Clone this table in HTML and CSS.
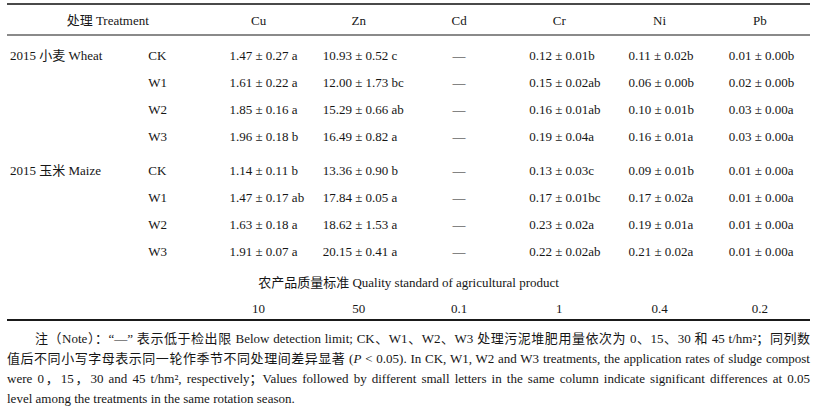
FILE: index.html
```html
<!DOCTYPE html>
<html lang="zh">
<head>
<meta charset="utf-8">
<title>Table</title>
<link rel="stylesheet" href="styles.css">
</head>
<body>
<div class="page">
  <table class="data">
    <colgroup>
      <col class="c-grp"><col class="c-trt">
      <col class="c-v"><col class="c-v"><col class="c-v"><col class="c-v"><col class="c-v"><col class="c-v">
    </colgroup>
    <thead>
      <tr class="head">
        <th colspan="2">处理 Treatment</th>
        <th>Cu</th><th>Zn</th><th>Cd</th><th>Cr</th><th>Ni</th><th>Pb</th>
      </tr>
    </thead>
    <tbody>
      <tr class="gap1"><td colspan="8"></td></tr>
      <tr class="row">
        <td class="grp">2015 小麦 Wheat</td><td class="trt">CK</td>
        <td class="cu">1.47 ± 0.27 a</td><td class="zn">10.93 ± 0.52 c</td><td class="cd">—</td>
        <td class="cr">0.12 ± 0.01b</td><td class="ni">0.11 ± 0.02b</td><td class="pb">0.01 ± 0.00b</td>
      </tr>
      <tr class="row">
        <td class="grp"></td><td class="trt">W1</td>
        <td class="cu">1.61 ± 0.22 a</td><td class="zn">12.00 ± 1.73 bc</td><td class="cd">—</td>
        <td class="cr">0.15 ± 0.02ab</td><td class="ni">0.06 ± 0.00b</td><td class="pb">0.02 ± 0.00b</td>
      </tr>
      <tr class="row">
        <td class="grp"></td><td class="trt">W2</td>
        <td class="cu">1.85 ± 0.16 a</td><td class="zn">15.29 ± 0.66 ab</td><td class="cd">—</td>
        <td class="cr">0.16 ± 0.01ab</td><td class="ni">0.10 ± 0.01b</td><td class="pb">0.03 ± 0.00a</td>
      </tr>
      <tr class="row">
        <td class="grp"></td><td class="trt">W3</td>
        <td class="cu">1.96 ± 0.18 b</td><td class="zn">16.49 ± 0.82 a</td><td class="cd">—</td>
        <td class="cr">0.19 ± 0.04a</td><td class="ni">0.16 ± 0.01a</td><td class="pb">0.03 ± 0.00a</td>
      </tr>
      <tr class="gap2"><td colspan="8"></td></tr>
      <tr class="row">
        <td class="grp">2015 玉米 Maize</td><td class="trt">CK</td>
        <td class="cu">1.14 ± 0.11 b</td><td class="zn">13.36 ± 0.90 b</td><td class="cd">—</td>
        <td class="cr">0.13 ± 0.03c</td><td class="ni">0.09 ± 0.01b</td><td class="pb">0.01 ± 0.00a</td>
      </tr>
      <tr class="row">
        <td class="grp"></td><td class="trt">W1</td>
        <td class="cu">1.47 ± 0.17 ab</td><td class="zn">17.84 ± 0.05 a</td><td class="cd">—</td>
        <td class="cr">0.17 ± 0.01bc</td><td class="ni">0.17 ± 0.02a</td><td class="pb">0.01 ± 0.00a</td>
      </tr>
      <tr class="row">
        <td class="grp"></td><td class="trt">W2</td>
        <td class="cu">1.63 ± 0.18 a</td><td class="zn">18.62 ± 1.53 a</td><td class="cd">—</td>
        <td class="cr">0.23 ± 0.02a</td><td class="ni">0.19 ± 0.01a</td><td class="pb">0.01 ± 0.00a</td>
      </tr>
      <tr class="row">
        <td class="grp"></td><td class="trt">W3</td>
        <td class="cu">1.91 ± 0.07 a</td><td class="zn">20.15 ± 0.41 a</td><td class="cd">—</td>
        <td class="cr">0.22 ± 0.02ab</td><td class="ni">0.21 ± 0.02a</td><td class="pb">0.01 ± 0.00a</td>
      </tr>
      <tr class="std-title">
        <td colspan="8">农产品质量标准 Quality standard of agricultural product</td>
      </tr>
      <tr class="std-vals">
        <td colspan="2"></td>
        <td>10</td><td>50</td><td>0.1</td><td>1</td><td>0.4</td><td>0.2</td>
      </tr>
    </tbody>
  </table>
  <p class="note">
    <span class="ln first">注（Note）：“—” 表示低于检出限 Below detection limit; CK、W1、W2、W3 处理污泥堆肥用量依次为 0、15、30 和 45 t/hm²；同列数</span>
    <span class="ln">值后不同小写字母表示同一轮作季节不同处理间差异显著 (<i>P</i> &lt; 0.05). In CK, W1, W2 and W3 treatments, the application rates of sludge compost</span>
    <span class="ln">were 0，15，30 and 45 t/hm², respectively；Values followed by different small letters in the same column indicate significant differences at 0.05</span>
    <span class="ln last">level among the treatments in the same rotation season.</span>
  </p>
</div>
</body>
</html>
```

FILE: styles.css
```css
html, body {
  margin: 0;
  padding: 0;
  background: #ffffff;
}

body {
  font-family: "Liberation Serif", "Noto Sans CJK SC", serif;
  font-size: 13px;
  color: #161616;
}

.page {
  padding: 3px 7px 0 7px;
  width: 803px;
}

.data {
  width: 803px;
  border-collapse: collapse;
  table-layout: fixed;
  border-top: 2px solid #4a4a4a;
  border-bottom: 2px solid #1a1a1a;
}

.c-grp { width: 133px; }
.c-trt { width: 68px; }
.c-v { width: 100px; }

.data th,
.data td {
  padding: 0;
  font-weight: normal;
  white-space: nowrap;
  line-height: 16px;
  box-sizing: border-box;
}

.head th {
  height: 31px;
  text-align: center;
  vertical-align: middle;
  padding-top: 3px;
  border-bottom: 2px solid #8a8a8a;
}

.gap1 td { height: 7px; }
.gap2 td { height: 7px; }

.row td {
  height: 27px;
  vertical-align: middle;
}

.grp { padding-left: 3px !important; }
.trt { padding-left: 8px !important; }
.cu { padding-left: 21px !important; }
.zn { padding-left: 14px !important; }
.cd { text-align: center; }
.cr { padding-left: 20px !important; }
.ni { padding-left: 19px !important; }
.pb { padding-left: 19px !important; }

.std-title td {
  height: 30px;
  padding-top: 5px;
  text-align: center;
  vertical-align: middle;
}

.std-vals td {
  height: 25px;
  padding-top: 4px;
  text-align: center;
  vertical-align: middle;
}

.note {
  margin: 8px 0 0 0;
  line-height: 20px;
}

.ln {
  display: block;
  text-align: justify;
  text-align-last: justify;
}

.ln.first { padding-left: 28px; }
.ln.last { text-align-last: left; }
```
